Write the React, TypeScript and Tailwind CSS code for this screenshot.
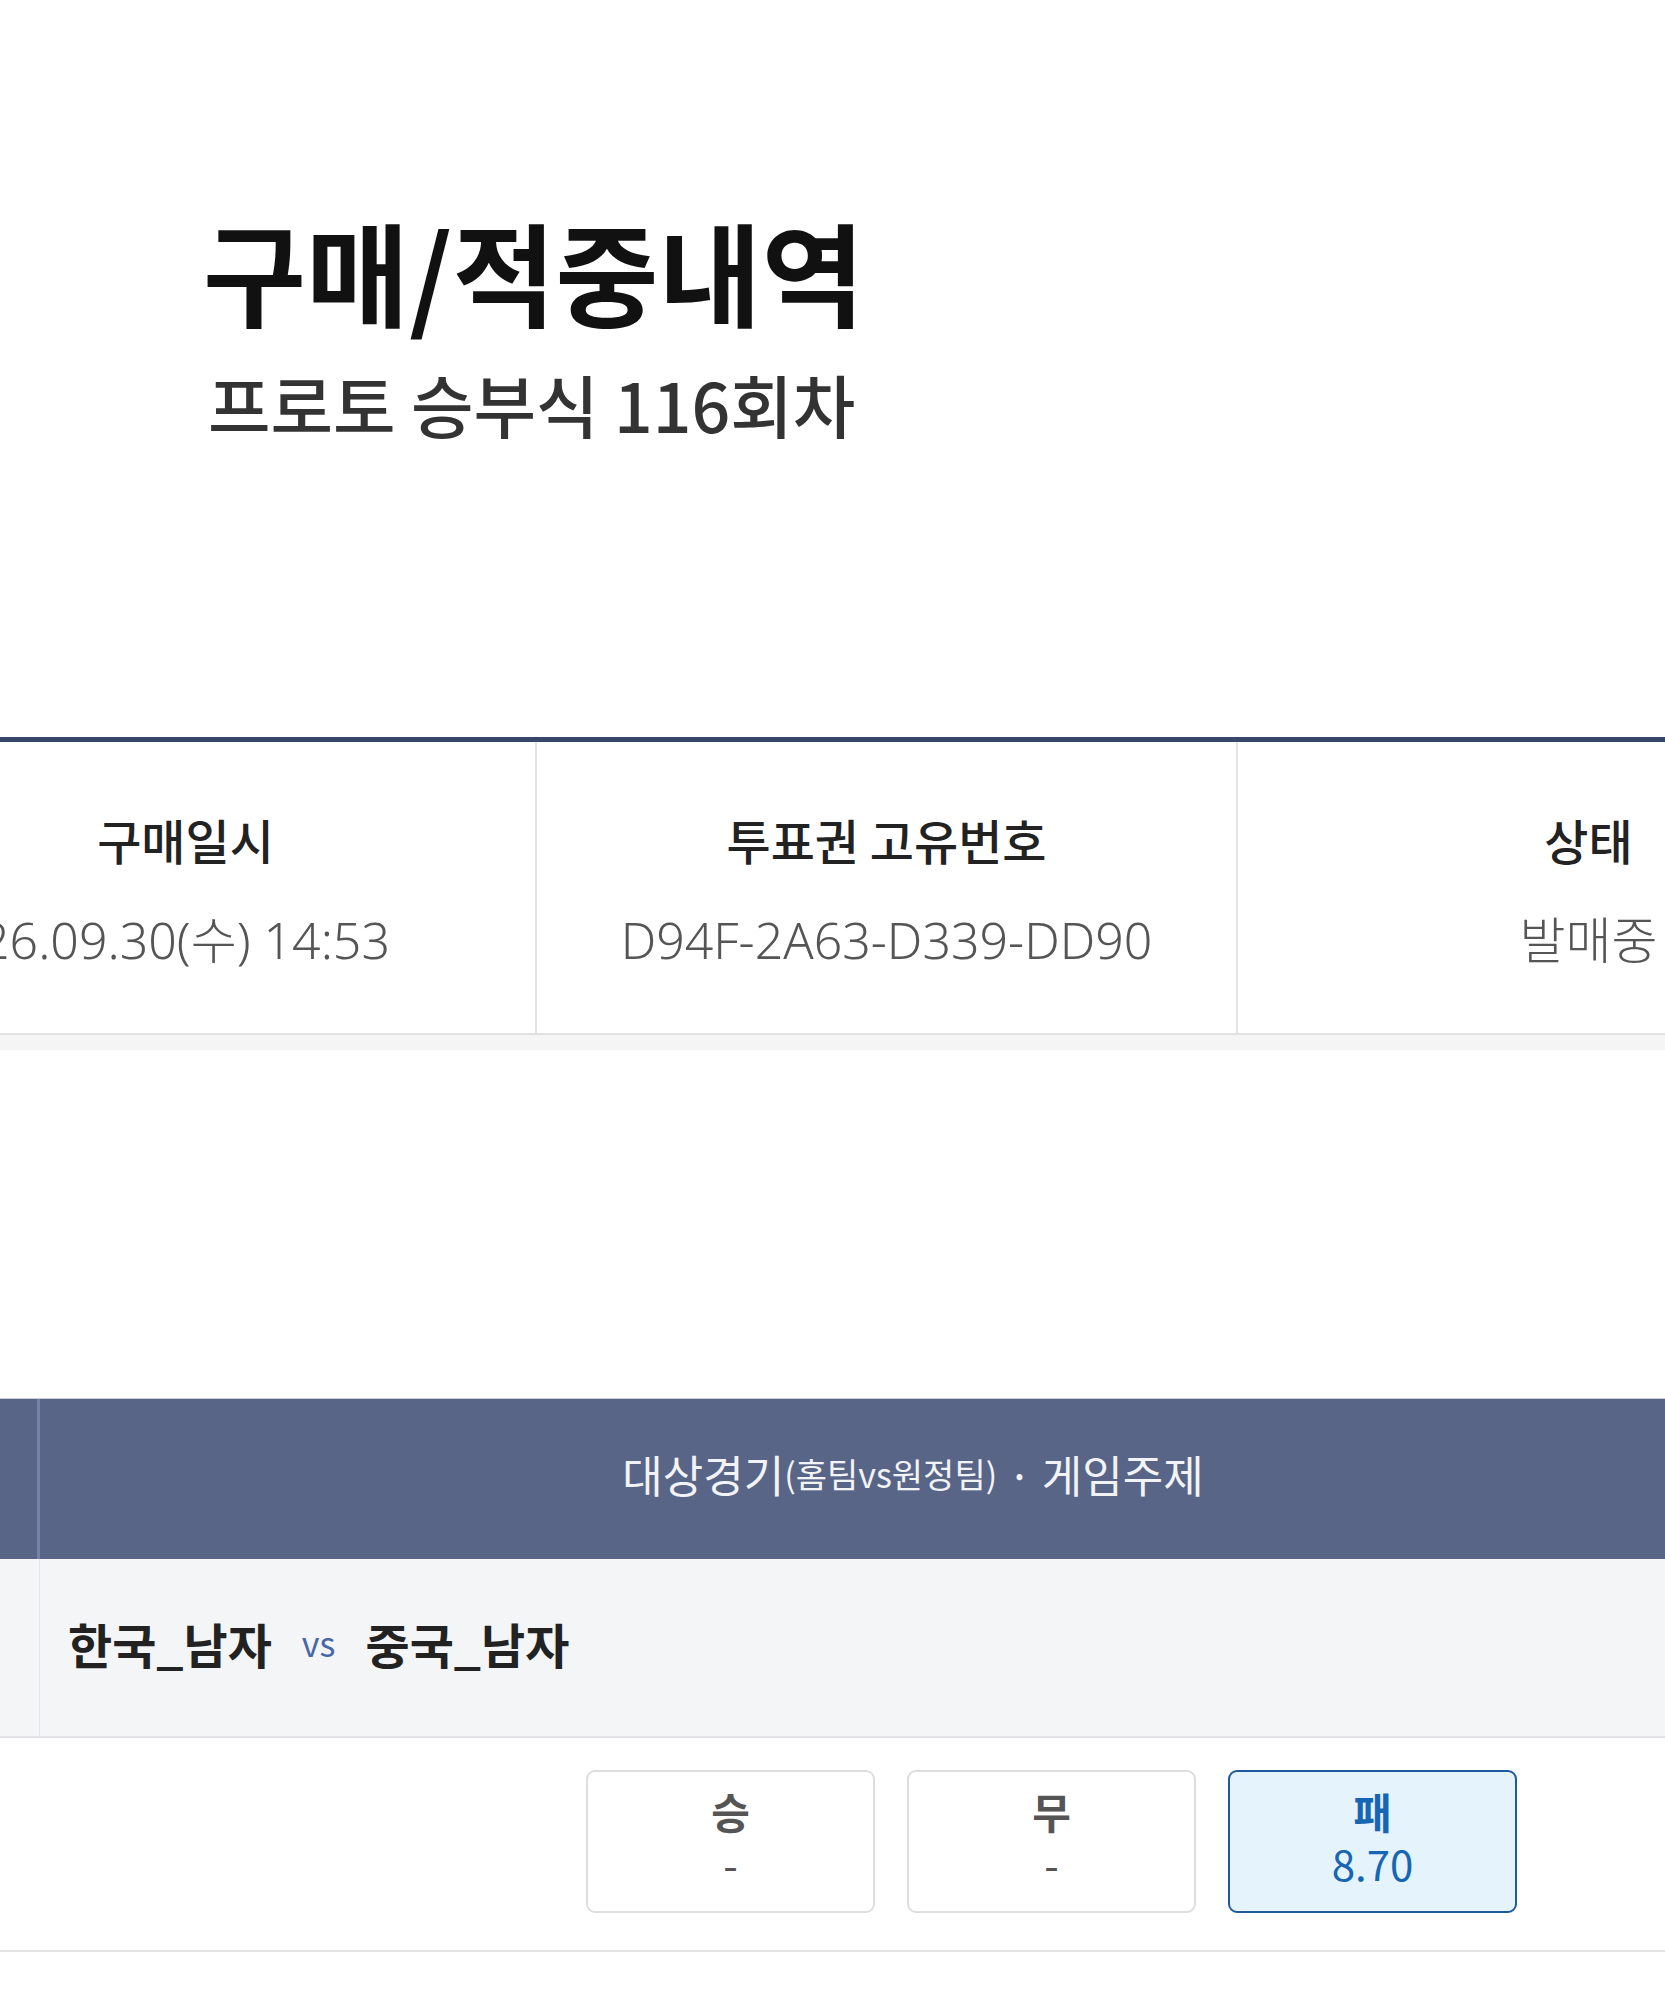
export default function App() {
  const info = [
    { label: "구매일시", value: "26.09.30(수) 14:53" },
    { label: "투표권 고유번호", value: "D94F-2A63-D339-DD90" },
    { label: "상태", value: "발매중" },
  ];

  const picks = [
    { label: "승", odds: "-", selected: false },
    { label: "무", odds: "-", selected: false },
    { label: "패", odds: "8.70", selected: true },
  ];

  return (
    <div className="min-h-[2000px] w-full overflow-x-hidden bg-white font-['Noto_Sans_CJK_KR','Noto_Sans',sans-serif]">
      {/* page title */}
      <header className="pl-[203px] pt-[206px]">
        <h1 className="text-[112px] font-bold leading-[128px] text-[#111]">구매/적중내역</h1>
        <p className="ml-[5px] mt-[30px] text-[68px] font-medium leading-[80px] text-[#333]">
          프로토 승부식 116회차
        </p>
      </header>

      {/* ticket summary table */}
      <section className="mt-[293px] border-t-[5px] border-[#37476a]">
        <div className="-ml-[164px] flex w-[2103px] border-b-2 border-[#e1e1e1]">
          {info.map((c, i) => (
            <div
              key={c.label}
              className={
                "flex w-[701px] flex-col items-center pt-[67px] pb-[63px] " +
                (i < 2 ? "border-r-2 border-[#e3e3e3]" : "")
              }
            >
              <div className="whitespace-nowrap text-[48px] font-medium leading-[60px] text-[#222]">
                {c.label}
              </div>
              <div className="mt-[41px] whitespace-nowrap font-['Noto_Sans','Noto_Sans_CJK_KR',sans-serif] text-[50px] font-light leading-[60px] text-[#555]">
                {c.value}
              </div>
            </div>
          ))}
        </div>
        <div className="h-[15px] bg-[#f5f5f6]" />
      </section>

      {/* match list */}
      <section className="mt-[348px] w-[1786px]">
        <div className="flex border-t border-[#c9cdd8] bg-[#596586]">
          <div className="w-[40px] border-r-[3px] border-[#7683a6]" />
          <div className="flex h-[160px] flex-1 items-center justify-center pb-[10px] text-[44px] leading-none text-[#f2f3f6]">
            <span>대상경기</span>
            <span className="text-[34px]">(홈팀vs원정팀)</span>
            <span className="mx-[10px]">·</span>
            <span>게임주제</span>
          </div>
        </div>

        <div className="flex border-b-2 border-[#e3e4e7] bg-[#f4f5f7]">
          <div className="w-[40px] border-r border-[#e6e7eb]" />
          <div className="flex h-[177px] flex-1 items-center pb-[10px] pl-[28px]">
            <span className="text-[48px] font-bold text-[#222]">한국_남자</span>
            <span className="mx-[30px] text-[34px] text-[#4767a8]">vs</span>
            <span className="text-[48px] font-bold text-[#222]">중국_남자</span>
          </div>
        </div>

        <div className="flex h-[214px] justify-end gap-[32px] border-b-2 border-[#e3e3e3] pr-[269px] pt-[32px]">
          {picks.map((p) => (
            <button
              key={p.label}
              className={
                "flex h-[143px] w-[289px] flex-col items-center gap-[4px] rounded-[9px] border-2 pt-[15px] " +
                (p.selected
                  ? "border-[#1d5b9c] bg-[#e5f3fd] text-[#1766b4]"
                  : "border-[#dedede] bg-white text-[#555]")
              }
            >
              <span className="text-[42px] font-bold leading-[48px]">{p.label}</span>
              <span className="text-[42px] leading-[48px]">{p.odds}</span>
            </button>
          ))}
        </div>
      </section>
    </div>
  );
}
